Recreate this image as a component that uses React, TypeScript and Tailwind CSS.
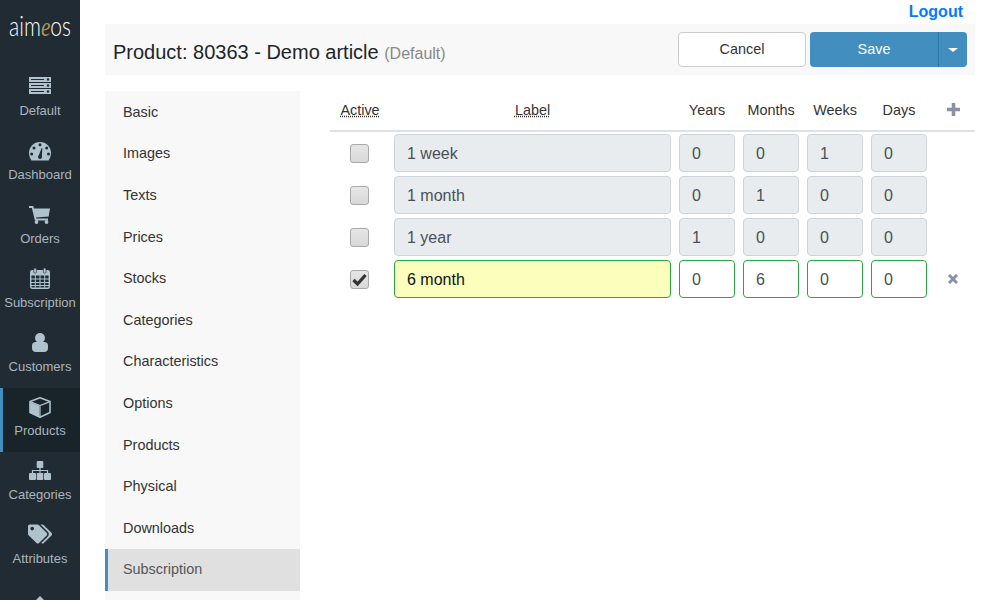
import React from 'react'
import { FaTags } from 'react-icons/fa'

const ICON = '#b0c2cd'
const DARK = '#212b33'

function ServerIcon() {
  return (
    <svg width="22" height="17" viewBox="0 0 22 17" className="-mt-[2px]">
      {[0, 6, 12].map(y => (
        <g key={y}>
          <rect x="0" y={y} width="22" height="5" fill={ICON} />
          <rect x="2" y={y + 2} width="13" height="1" fill={DARK} />
          <circle cx="19" cy={y + 2.5} r="1.2" fill={DARK} />
        </g>
      ))}
    </svg>
  )
}

function GaugeIcon() {
  return (
    <svg width="22" height="19" viewBox="0 0 22 19" className="mt-[2px]">
      <path d="M2.5 18.5 Q0 15.5 0 11 A11 11 0 0 1 22 11 Q22 15.5 19.5 18.5 Z" fill={ICON} />
      {[[5, 6], [11, 2.7], [17.7, 6], [2.7, 12], [19.5, 12]].map(([x, y]) => (
        <circle key={x} cx={x} cy={y} r="1.5" fill={DARK} />
      ))}
      <path d="M9.4 14.5 L12.6 6 L13.4 6.2 L12.8 14.8 Z" fill={DARK} />
      <circle cx="11" cy="15" r="2" fill={DARK} />
    </svg>
  )
}

function CartIcon() {
  return (
    <svg width="22" height="18" viewBox="0 0 22 18" className="mt-[2px]">
      <path d="M0 1 H3.6 L6.6 13.5 H19" fill="none" stroke={ICON} strokeWidth="1.8" />
      <path d="M4.5 2.5 H21 L19.6 10.5 L6.5 11.5 Z" fill={ICON} />
      <circle cx="7.5" cy="16" r="1.9" fill={ICON} />
      <circle cx="17.5" cy="16" r="1.9" fill={ICON} />
    </svg>
  )
}

function CalendarIcon() {
  return (
    <svg width="20" height="21" viewBox="0 0 20 21">
      <rect x="0.7" y="2.7" width="18.6" height="17.6" rx="1.5" fill="none" stroke={ICON} strokeWidth="1.4" />
      <rect x="1" y="3" width="18" height="4.5" fill={ICON} />
      <path d="M1 11 H19 M1 14.5 H19 M1 17.5 H19 M5.3 7 V20 M10 7 V20 M14.7 7 V20" stroke={ICON} strokeWidth="1" />
      <rect x="3.8" y="0" width="2.6" height="5.2" rx="1.2" fill={ICON} stroke={DARK} strokeWidth="0.6" />
      <rect x="13.4" y="0" width="2.6" height="5.2" rx="1.2" fill={ICON} stroke={DARK} strokeWidth="0.6" />
    </svg>
  )
}

function UserIcon() {
  return (
    <svg width="16" height="19" viewBox="0 0 16 19" className="mt-[1px]">
      <circle cx="8" cy="5" r="5" fill={ICON} />
      <rect x="0" y="9" width="16" height="10" rx="4" fill={ICON} />
    </svg>
  )
}

function CubeIcon() {
  return (
    <svg width="22" height="21" viewBox="0 0 22 21" className="mt-[2px]">
      <path d="M11 0.8 L21 4.6 V15.6 L11 20.2 L1 15.6 V4.6 Z" fill="none" stroke={ICON} strokeWidth="1.6" strokeLinejoin="round" />
      <path d="M1 5 L10.4 9 V20 L1 15.6 Z" fill={ICON} />
      <path d="M1 4.6 L11 8.6 L21 4.6 M11 8.6 V20" fill="none" stroke={ICON} strokeWidth="1.2" />
    </svg>
  )
}

function SitemapIcon() {
  return (
    <svg width="22" height="19" viewBox="0 0 22 19" className="mt-[1px]">
      <rect x="7.7" y="0" width="6.6" height="7" rx="1" fill={ICON} />
      <path d="M11 7 V12 M3.5 12 V9.5 H18.5 V12" fill="none" stroke={ICON} strokeWidth="1.2" />
      <rect x="0" y="12" width="7" height="7" rx="1" fill={ICON} />
      <rect x="7.7" y="12" width="6.6" height="7" rx="1" fill={ICON} />
      <rect x="15" y="12" width="7" height="7" rx="1" fill={ICON} />
    </svg>
  )
}

function PlusIcon() {
  return (
    <svg width="13" height="13" viewBox="0 0 13 13">
      <path d="M6.5 0.5 V12.5 M0.5 6.5 H12.5" stroke="#8a90a8" strokeWidth="3.6" strokeLinecap="round" />
    </svg>
  )
}

function CrossIcon() {
  return (
    <svg width="10" height="10" viewBox="0 0 10 10">
      <path d="M1 1 L9 9 M9 1 L1 9" stroke="#8a90a8" strokeWidth="3" />
    </svg>
  )
}

const menu = [
  { label: 'Default', icon: <ServerIcon /> },
  { label: 'Dashboard', icon: <GaugeIcon /> },
  { label: 'Orders', icon: <CartIcon /> },
  { label: 'Subscription', icon: <CalendarIcon /> },
  { label: 'Customers', icon: <UserIcon /> },
  { label: 'Products', icon: <CubeIcon />, active: true },
  { label: 'Categories', icon: <SitemapIcon /> },
  { label: 'Attributes', icon: <FaTags size={24} color={ICON} /> },
]

const tabs = ['Basic', 'Images', 'Texts', 'Prices', 'Stocks', 'Categories', 'Characteristics', 'Options', 'Products', 'Physical', 'Downloads', 'Subscription']

const rows = [
  { label: '1 week', values: ['0', '0', '1', '0'] },
  { label: '1 month', values: ['0', '1', '0', '0'] },
  { label: '1 year', values: ['1', '0', '0', '0'] },
  { label: '6 month', values: ['0', '6', '0', '0'], isNew: true },
]

function Sidebar() {
  return (
    <aside className="w-20 shrink-0 h-[600px] overflow-hidden bg-[#212b33]">
      <div className="h-[68px] pt-[10px] text-center text-[27px] leading-8 text-white font-['Lato',sans-serif] font-light scale-x-[0.78]">
        aim<span className="font-['Liberation_Serif',serif] italic text-[#b8924a]">e</span>os
      </div>
      {menu.map(item => (
        <div
          key={item.label}
          className={`h-16 flex flex-col items-center pt-[7px] text-[13px] text-[#a9b6bf] ${item.active ? 'bg-[#19232a] border-l-[3px] border-[#428fbf] pr-[3px]' : ''}`}
        >
          <div className="h-[22px] flex items-center justify-center">{item.icon}</div>
          <span className="mt-[4px] leading-5">{item.label}</span>
        </div>
      ))}
      <div className="flex justify-center pt-4">
        <svg width="22" height="11" viewBox="0 0 22 11">
          <path d="M11 0 L22 11 H0 Z" fill={ICON} />
        </svg>
      </div>
    </aside>
  )
}

function Checkbox({ checked }: { checked?: boolean }) {
  return (
    <div className="w-[19px] h-[19px] rounded-[3px] border border-[#aaa] bg-linear-to-b from-[#e6e6e6] to-[#d8d8d8] flex items-center justify-center">
      {checked && (
        <svg width="15" height="13" viewBox="0 0 15 13">
          <path d="M1.5 7 L5.5 11 L13.5 2" fill="none" stroke="#333" strokeWidth="3.2" />
        </svg>
      )}
    </div>
  )
}

function Field({ value, isNew, wide }: { value: string; isNew?: boolean; wide?: boolean }) {
  const tone = isNew
    ? wide
      ? 'bg-[#fbffbb] border-[#28a745] text-[#111]'
      : 'bg-white border-[#28a745] text-[#495057]'
    : 'bg-[#e9ecef] border-[#ced4da] text-[#495057]'
  return (
    <div className={`h-[38px] rounded border px-3 pt-px flex items-center text-base ${wide ? 'w-[277px]' : 'w-14'} ${tone}`}>
      {value}
    </div>
  )
}

export default function App() {
  return (
    <div className="flex h-[600px] overflow-hidden bg-white font-['Liberation_Sans',sans-serif] text-[#212529]">
      <Sidebar />
      <main className="flex-1 min-w-0 px-[25px]">
        <div className="h-6 pr-3 text-right text-base leading-6 font-bold text-[#007bff]">Logout</div>

        <div className="h-[51px] bg-[#f8f8f8] flex items-center justify-between pl-2 pr-2">
          <h1 className="text-xl pt-[5px]">
            Product: 80363 - Demo article <span className="text-base text-[#888]">(Default)</span>
          </h1>
          <div className="flex gap-1 text-[14.4px]">
            <button className="w-32 h-[35px] bg-white border border-[#ccc] rounded text-[#333]">Cancel</button>
            <div className="flex h-[35px] w-[157px] rounded bg-[#428fbf] text-white">
              <button className="flex-1">Save</button>
              <div className="w-[29px] border-l border-[#2f76a3] flex items-center justify-center">
                <span className="border-x-[5px] border-x-transparent border-t-[4px] border-t-white" />
              </div>
            </div>
          </div>
        </div>

        <div className="flex mt-4">
          <nav className="w-[195px] h-[509px] shrink-0 pt-[0.85px] bg-[#f8f8f8] text-[14.4px]">
            {tabs.map((tab, i) => (
              <div
                key={tab}
                className={`h-[41.6px] flex items-center ${i === tabs.length - 1 ? 'bg-[#e0e0e0] border-l-[3px] border-[#428fbf] pl-[15px] text-[#555]' : 'pl-[18px] text-[#333]'}`}
              >
                {tab}
              </div>
            ))}
          </nav>

          <div className="flex-1 min-w-0 ml-[30px] text-[14.4px]">
            <div className="h-[41px] border-b-2 border-[#dee2e6] flex items-center text-center text-[#333]">
              <span className="w-[60px] underline decoration-dotted">Active</span>
              <span className="w-[285px] px-1 underline decoration-dotted">Label</span>
              <span className="w-16">Years</span>
              <span className="w-16">Months</span>
              <span className="w-16">Weeks</span>
              <span className="w-16">Days</span>
              <span className="w-[44px] flex justify-center mb-[2px]">
                <PlusIcon />
              </span>
            </div>
            <div className="pt-[2px] flex flex-col gap-1">
              {rows.map(row => (
                <div key={row.label} className="flex items-center h-[38px]">
                  <div className="w-[64px] pr-[6px] flex justify-center">
                    <Checkbox checked={row.isNew} />
                  </div>
                  <Field value={row.label} isNew={row.isNew} wide />
                  <div className="flex gap-2 ml-2">
                    {row.values.map((v, i) => (
                      <Field key={i} value={v} isNew={row.isNew} />
                    ))}
                  </div>
                  {row.isNew && (
                    <div className="w-[48px] pl-[4px] flex justify-center">
                      <CrossIcon />
                    </div>
                  )}
                </div>
              ))}
            </div>
          </div>
        </div>
      </main>
    </div>
  )
}
